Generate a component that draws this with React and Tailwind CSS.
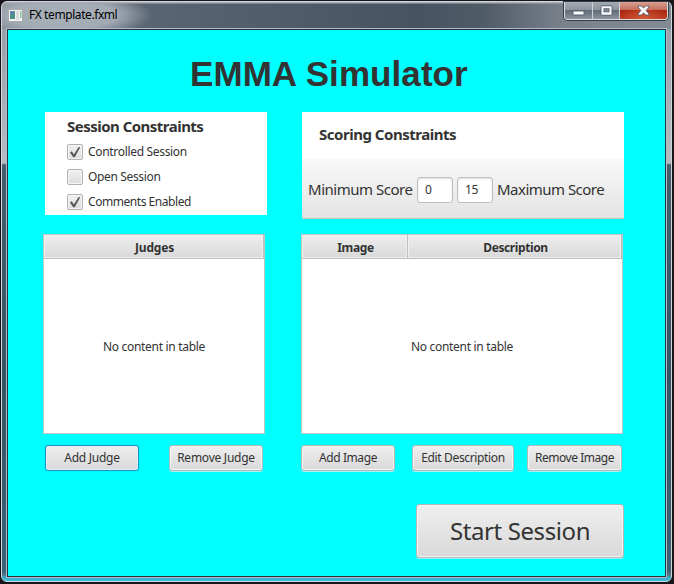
const UI = "font-['Noto_Sans','Open_Sans',sans-serif]";

function CheckRow({ label, checked, track }) {
  return (
    <div className="flex h-[25px] items-center">
      <span className="flex h-4 w-4 items-center justify-center rounded-[2px] border border-[#b2b2b2] bg-gradient-to-b from-[#f0f0f0] to-[#dcdcdc] shadow-[inset_0_0_0_1px_#f5f5f5]">
        {checked && (
          <svg width="12" height="12" viewBox="0 0 12 12" className="shrink-0">
            <path d="M1 6.400 2.800 5.300 4.900 8.400 9.600 1 11.200 1.200 5.700 11.300 4.300 11.300Z" fill="#555" />
          </svg>
        )}
      </span>
      <span className={`ml-[5px] text-[12px] leading-4 ${track}`}>{label}</span>
    </div>
  );
}

function Button({ children, className, focused = false }) {
  return (
    <button
      className={`flex items-center justify-center whitespace-nowrap rounded-[3px] border bg-gradient-to-b from-[#efefef] to-[#d9d9d9] ${
        focused
          ? "border-[#1595cf] shadow-[inset_0_0_0_1px_#e0eef4,0_0_1px_0_#08a5d5]"
          : "border-[#b7b7b7] shadow-[inset_0_0_0_1px_#f4f4f4,0_1px_0_0_#a5f0f0]"
      } ${className}`}
    >
      {children}
    </button>
  );
}

function HeaderCell({ children, className }) {
  return (
    <div
      className={`flex h-[24px] items-center justify-center border-b border-r border-[#bdbdbd] bg-gradient-to-b from-[#eeeeee] to-[#d9d9d9] pl-[2px] pt-[2px] text-[12px] font-bold shadow-[inset_0_0_0_1px_#f0f0f0] ${className}`}
    >
      {children}
    </div>
  );
}

function Table({ children, className }) {
  return (
    <div className={`flex h-[200px] flex-col border border-[#c4c4c4] bg-white ${className}`}>
      <div className="flex">{children}</div>
      <div className="flex flex-1 items-center justify-center pt-[2px] text-[12px] tracking-[-0.3px]">
        No content in table
      </div>
    </div>
  );
}

function TitleBar() {
  return (
    <div className="flex h-[27px] shrink-0 items-start justify-between">
      <div className="flex h-[26px] items-center pl-[6px]">
        <svg width="15" height="13" viewBox="0 0 15 13">
          <rect x=".5" y=".5" width="14" height="12" fill="#f4f4f4" stroke="#aaa" />
          <rect x="2" y="2" width="5" height="8" fill="#4d9189" />
          <rect x="2" y="2" width="4" height="3" fill="#5e85aa" />
          <rect x="8" y="2" width="3" height="9" fill="#dcdcdc" />
          <rect x="12" y="2" width="1.5" height="7" fill="#8ac8a5" />
        </svg>
        <span className="ml-[6px] text-[12px] tracking-[-0.42px] text-black">FX template.fxml</span>
      </div>
      <div className="mr-[3px] flex h-[18px] overflow-hidden rounded-b-[4px] border border-t-0 border-[#d9dde0] shadow-[0_0_0_1px_#333c44]">
        <div className="flex w-[28px] items-center justify-center border-r border-[#d0d3d6] bg-[linear-gradient(#a5abb2_0%,#8c939c_48%,#626c78_50%,#8c949d_100%)] pt-[3px]">
          <svg width="13" height="8" viewBox="0 0 13 8">
            <rect x="1" y="3" width="11" height="4" rx=".5" fill="#fff" stroke="#555e70" />
          </svg>
        </div>
        <div className="flex w-[27px] items-center justify-center border-r border-[#d0d3d6] bg-[linear-gradient(#a5abb2_0%,#8c939c_48%,#626c78_50%,#8c949d_100%)]">
          <svg width="13" height="11" viewBox="0 0 13 11">
            <rect x="1" y=".8" width="11" height="9.4" rx=".5" fill="#fff" stroke="#555e70" />
            <rect x="4" y="3.8" width="5" height="3" fill="#858c98" stroke="#555e70" />
          </svg>
        </div>
        <div className="flex w-[47px] items-center justify-center bg-[radial-gradient(ellipse_at_bottom,#e9774e80,transparent_70%),linear-gradient(#d9a092_0%,#c46d5c_46%,#a92610_50%,#bd3c20_100%)]">
          <svg width="13" height="11" viewBox="0 0 13 11">
            <path
              d="M1 1h3.5l2 2.2L8.500 1H12v1L9.100 5.500 12 9v1H8.500l-2-2.200L4.500 10H1V9l2.900-3.500L1 2Z"
              fill="#fff"
              stroke="#555e70"
              strokeWidth=".9"
            />
          </svg>
        </div>
      </div>
    </div>
  );
}

export default function App() {
  return (
    <div className={`h-[584px] w-[674px] bg-[#17151b] pl-px pr-[2px] pt-px pb-[2px] text-[#333333] ${UI}`}>
      <div className="flex h-[581px] w-[671px] flex-col rounded-[6px] border border-[#cfd6dc] bg-[linear-gradient(to_top,#39c6e4_0,#39c6e4_5px,transparent_6px),radial-gradient(ellipse_90px_24px_at_60px_13px,#a9b1bb_0%,#a2aab4_60%,transparent_100%),linear-gradient(#aaaeb6_0px,#aaaeb6_1px,transparent_2px),linear-gradient(to_right,#7d858f_0%,#596572_22%,#475360_62%,#505b68_72%,#7a818b_84%,#858b94_100%)]">
        <TitleBar />
        <div className="flex flex-1 bg-[linear-gradient(#98a0aa_0,#b8bcc2_134px,#455d6d_136px,#365364_350px,#3b6275_98%,transparent)] px-[5px] pb-[4px]">
          <div className="flex w-[660px] flex-col border border-[#263340] bg-[#00ffff] shadow-[0_0_0_1px_#afbdc5]">
            <h1 className="ml-[182px] mt-[24px] h-[40px] whitespace-nowrap font-['Liberation_Sans',Arial,sans-serif] text-[35px] font-bold leading-[40px] tracking-[0.07px]">
              EMMA Simulator
            </h1>

            <div className="ml-[37px] mt-[18px] flex h-[107px] items-start gap-[35px]">
              <section className="h-[103px] w-[222px] bg-white pl-[22px] pt-[4px]">
                <h2 className="h-[23px] text-[15px] font-bold leading-[20px] tracking-[-0.52px]">Session Constraints</h2>
                <CheckRow label="Controlled Session" checked track="tracking-[-0.32px]" />
                <CheckRow label="Open Session" track="tracking-[-0.35px]" />
                <CheckRow label="Comments Enabled" checked track="tracking-[-0.45px]" />
              </section>
              <section className="h-[107px] w-[322px] bg-white">
                <h2 className="h-[47px] pl-[17px] pt-[12px] text-[15px] font-bold leading-[20px] tracking-[-0.48px]">
                  Scoring Constraints
                </h2>
                <div className="flex h-[60px] items-center whitespace-nowrap border-b border-[#c3c3c3] bg-gradient-to-b from-[#f9f9f9] to-[#e3e3e3] pl-[6px] pt-[2px]">
                  <span className="w-[109px] text-[15px] tracking-[-0.48px]">Minimum Score</span>
                  <span className="flex h-[26px] w-[36px] items-center rounded-[3px] border border-[#bfbfbf] bg-white pl-[7px] text-[12px] tracking-[-0.3px] shadow-[inset_0_1px_2px_#ddd]">
                    0
                  </span>
                  <span className="ml-[4px] flex h-[26px] w-[36px] items-center rounded-[3px] border border-[#bfbfbf] bg-white pl-[7px] text-[12px] tracking-[-0.3px] shadow-[inset_0_1px_2px_#ddd]">
                    15
                  </span>
                  <span className="ml-[4px] text-[15px] tracking-[-0.52px]">Maximum Score</span>
                </div>
              </section>
            </div>

            <div className="ml-[35px] mt-[15px] flex gap-[36px]">
              <Table className="w-[222px]">
                <HeaderCell className="w-full tracking-[-0.2px]">Judges</HeaderCell>
              </Table>
              <Table className="w-[322px]">
                <HeaderCell className="w-[106px] tracking-[-0.35px]">Image</HeaderCell>
                <HeaderCell className="flex-1 tracking-[-0.4px]">Description</HeaderCell>
              </Table>
            </div>

            <div className="ml-[37px] mt-[11px] flex h-[26px] text-[12px] tracking-[-0.25px]">
              <Button focused className="w-[94px]">Add Judge</Button>
              <Button className="ml-[30px] w-[94px]">Remove Judge</Button>
              <Button className="ml-[38px] w-[94px] tracking-[-0.4px]">Add Image</Button>
              <Button className="ml-[17px] w-[102px] tracking-[-0.35px]">Edit Description</Button>
              <Button className="ml-[13px] w-[95px] tracking-[-0.45px]">Remove Image</Button>
            </div>

            <Button className="ml-[408px] mt-[33px] h-[54px] w-[208px] text-[24px] tracking-[-0.4px]">Start Session</Button>
          </div>
        </div>
      </div>
    </div>
  );
}
